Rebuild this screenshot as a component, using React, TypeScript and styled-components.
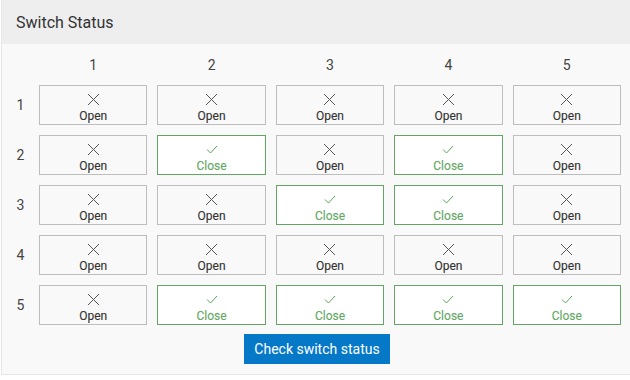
import React, { FC } from 'react';
import styled, { createGlobalStyle } from 'styled-components';

const GlobalStyle = createGlobalStyle`
  html, body {
    margin: 0;
    padding: 0;
    background: #ffffff;
    overflow: hidden;
  }
  body {
    font-family: Roboto, "Liberation Sans", Arial, sans-serif;
  }
`;

// 1 = closed, 0 = open
const matrix: number[][] = [
  [0, 0, 0, 0, 0],
  [0, 1, 0, 1, 0],
  [0, 0, 1, 1, 0],
  [0, 0, 0, 0, 0],
  [0, 1, 1, 1, 1],
];

const CrossIcon: FC = () => (
  <svg width="13" height="13" viewBox="0 0 13 13">
    <path d="M1 1 L12 12 M12 1 L1 12" stroke="#555" strokeWidth="1" fill="none" />
  </svg>
);

const CheckIcon: FC = () => (
  <svg width="12" height="9" viewBox="0 0 12 9">
    <path d="M1 4.5 L4.5 8 L11 1" stroke="#5aa55a" strokeWidth="1" fill="none" />
  </svg>
);

const SwitchCell: FC<{ closed: boolean }> = ({ closed }) => (
  <CellStyled $closed={closed}>
    <IconSlot>{closed ? <CheckIcon /> : <CrossIcon />}</IconSlot>
    <CellLabel $closed={closed}>{closed ? 'Close' : 'Open'}</CellLabel>
  </CellStyled>
);

export default function App() {
  return (
    <>
      <GlobalStyle />
      <PanelStyled>
        <PanelHeader>Switch Status</PanelHeader>
        <PanelBody>
          <GridStyled>
            <span />
            {[1, 2, 3, 4, 5].map(n => (
              <ColumnHead key={n}>{n}</ColumnHead>
            ))}
            {matrix.map((row, r) => (
              <React.Fragment key={r}>
                <RowHead>{r + 1}</RowHead>
                {row.map((v, c) => (
                  <SwitchCell key={c} closed={v === 1} />
                ))}
              </React.Fragment>
            ))}
          </GridStyled>
          <CheckButton>Check switch status</CheckButton>
        </PanelBody>
      </PanelStyled>
    </>
  );
}

const PanelStyled = styled.div`
  margin-left: 1px;
  width: 630px;
  border-left: 1px solid #e6e6e6;
  border-bottom: 1px solid #e6e6e6;
  display: flex;
  flex-direction: column;
`;

const PanelHeader = styled.div`
  height: 44px;
  background: #eeeeee;
  color: #333;
  font-size: 16px;
  line-height: 46px;
  padding-left: 14px;
`;

const PanelBody = styled.div`
  background: #f9f9f9;
  height: 330px;
  display: flex;
  flex-direction: column;
  align-items: center;
`;

const GridStyled = styled.div`
  align-self: stretch;
  display: grid;
  grid-template-columns: 27px repeat(5, 1fr);
  grid-template-rows: 20px repeat(5, 40px);
  column-gap: 10px;
  row-gap: 10px;
  padding: 11px 11px 0 0;
`;

const ColumnHead = styled.div`
  text-align: center;
  font-size: 14px;
  line-height: 20px;
  color: #444;
`;

const RowHead = styled.div`
  padding-left: 10px;
  text-align: center;
  font-size: 14px;
  line-height: 40px;
  color: #444;
`;

const CellStyled = styled.div<{ $closed: boolean }>`
  box-sizing: border-box;
  border: 1px solid ${p => (p.$closed ? '#64a464' : '#bdbdbd')};
  background: ${p => (p.$closed ? '#ffffff' : '#f9f9f9')};
  display: flex;
  flex-direction: column;
  align-items: center;
  padding-top: 6px;
`;

const IconSlot = styled.div`
  height: 14px;
  display: flex;
  align-items: center;
  justify-content: center;
`;

const CellLabel = styled.div<{ $closed: boolean }>`
  font-size: 12px;
  font-weight: 400;
  -webkit-text-stroke: 0.12px currentColor;
  line-height: 14px;
  margin-top: 3px;
  color: ${p => (p.$closed ? '#62a862' : '#333333')};
`;

const CheckButton = styled.button`
  margin-top: 9px;
  width: 146px;
  height: 30px;
  border: none;
  background: #0579c8;
  color: #ffffff;
  font-family: Roboto, "Liberation Sans", Arial, sans-serif;
  font-size: 14px;
  padding: 0;
  cursor: pointer;
`;
